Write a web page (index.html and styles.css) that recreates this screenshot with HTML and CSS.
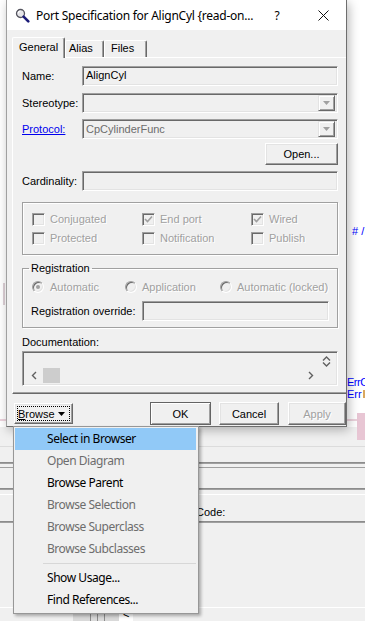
FILE: index.html
```html
<!DOCTYPE html>
<html lang="en">
<head>
    <meta charset="UTF-8">
    <meta name="viewport" content="width=device-width, initial-scale=1.0">
    <title>Port Specification</title>
    <link rel="stylesheet" href="styles.css">
</head>
<body>
<div class="screen">
    <div class="top">
        <div class="edge-left">
            <div class="left-mark"></div>
            <div class="left-pink"></div>
        </div>

        <div class="dialog">
            <div class="titlebar">
                <svg class="title-icon" width="15" height="15" viewBox="0 0 15 15">
                    <circle cx="5.5" cy="5.5" r="4" fill="#e6e6ea" stroke="#55555f" stroke-width="1.3"/>
                    <path d="M3.3 5.2a2.2 2.2 0 0 1 2.2-2.2" stroke="#fff" stroke-width="1.2" fill="none"/>
                    <path d="M8.6 8.6 L13.3 13.3" stroke="#1b1b78" stroke-width="2.6" stroke-linecap="round"/>
                </svg>
                <span class="title-text">Port Specification for AlignCyl {read-on...</span>
                <span class="caption-btn">?</span>
                <span class="caption-btn">
                    <svg width="11" height="11" viewBox="0 0 11 11">
                        <path d="M0.5 0.5 L10.5 10.5 M10.5 0.5 L0.5 10.5" stroke="#111" stroke-width="1"/>
                    </svg>
                </span>
            </div>

            <div class="client">
                <div class="tabs">
                    <div class="tab tab-active tab-general">General</div>
                    <div class="tab tab-alias">Alias</div>
                    <div class="tab tab-files">Files</div>
                </div>

                <div class="panel">
                    <div class="row gap7">
                        <label>Name:</label>
                        <div class="field">AlignCyl</div>
                    </div>
                    <div class="row gap6">
                        <label>Stereotype:</label>
                        <div class="field combo">
                            <span class="combo-text"></span>
                            <span class="drop-btn"><svg width="7" height="4" viewBox="0 0 7 4"><path d="M0 0H7L3.5 4Z" fill="#a0a0a0"/></svg></span>
                        </div>
                    </div>
                    <div class="row gap4">
                        <label><a class="link">Protocol:</a></label>
                        <div class="field combo">
                            <span class="combo-text muted">CpCylinderFunc</span>
                            <span class="drop-btn"><svg width="7" height="4" viewBox="0 0 7 4"><path d="M0 0H7L3.5 4Z" fill="#a0a0a0"/></svg></span>
                        </div>
                    </div>
                    <div class="row row-btn gap6">
                        <button class="btn btn-open">Open...</button>
                    </div>
                    <div class="row">
                        <label>Cardinality:</label>
                        <div class="field"></div>
                    </div>

                    <div class="checks">
                        <div class="check"><span class="box"></span><span class="dim">Conjugated</span></div>
                        <div class="check"><span class="box"><svg width="9" height="9" viewBox="0 0 9 9"><path d="M1 4 L3.5 6.5 L8 1.5" stroke="#a0a0a0" stroke-width="1.6" fill="none"/></svg></span><span class="dim">End port</span></div>
                        <div class="check"><span class="box"><svg width="9" height="9" viewBox="0 0 9 9"><path d="M1 4 L3.5 6.5 L8 1.5" stroke="#a0a0a0" stroke-width="1.6" fill="none"/></svg></span><span class="dim">Wired</span></div>
                        <div class="check"><span class="box"></span><span class="dim">Protected</span></div>
                        <div class="check"><span class="box"></span><span class="dim">Notification</span></div>
                        <div class="check"><span class="box"></span><span class="dim">Publish</span></div>
                    </div>

                    <fieldset class="registration">
                        <legend>Registration</legend>
                        <div class="radios">
                            <div class="radio r1"><span class="dot on"></span><span class="dim">Automatic</span></div>
                            <div class="radio r2"><span class="dot"></span><span class="dim">Application</span></div>
                            <div class="radio r3"><span class="dot"></span><span class="dim">Automatic (locked)</span></div>
                        </div>
                        <div class="override">
                            <label>Registration override:</label>
                            <div class="field field-override"></div>
                        </div>
                    </fieldset>

                    <div class="doc-label">Documentation:</div>
                    <div class="field doc">
                        <div class="doc-top">
                            <div class="doc-text"></div>
                            <div class="vscroll">
                                <svg width="9" height="5" viewBox="0 0 9 5"><path d="M1 4.5 L4.5 1 L8 4.5" stroke="#606060" stroke-width="1.4" fill="none"/></svg>
                                <svg width="9" height="5" viewBox="0 0 9 5"><path d="M1 0.5 L4.5 4 L8 0.5" stroke="#606060" stroke-width="1.4" fill="none"/></svg>
                            </div>
                        </div>
                        <div class="hscroll">
                            <svg class="arrow-left" width="6" height="9" viewBox="0 0 6 9"><path d="M5 1 L1.5 4.5 L5 8" stroke="#606060" stroke-width="1.4" fill="none"/></svg>
                            <span class="thumb"></span>
                            <svg class="arrow-right" width="6" height="9" viewBox="0 0 6 9"><path d="M1 1 L4.5 4.5 L1 8" stroke="#606060" stroke-width="1.4" fill="none"/></svg>
                        </div>
                    </div>
                </div>

                <div class="actions">
                    <button class="btn btn-browse"><span class="focus"><span><u>B</u>rowse</span><svg width="7" height="4" viewBox="0 0 7 4"><path d="M0 0H7L3.5 4Z" fill="#000"/></svg></span></button>
                    <button class="btn btn-ok">OK</button>
                    <button class="btn btn-cancel">Cancel</button>
                    <button class="btn btn-apply">Apply</button>
                </div>
            </div>
        </div>

        <div class="edge-right">
            <div class="note note-hash"># /</div>
            <div class="note note-err">ErrC</div>
            <div class="note">Err<span class="tiny-ico"></span></div>
            <div class="pink-row"><span class="pink-line"></span><span class="pink-block"></span></div>
        </div>
    </div>

    <div class="behind">
        <div class="band band-1"><span class="pink-tail"></span></div>
        <div class="line line-light"></div>
        <div class="band band-2"></div>
        <div class="line line-dark2"></div>
        <div class="band band-3"></div>
        <div class="line line-dark"></div>
        <div class="band band-4"></div>
        <div class="line line-dark2"></div>
        <div class="band band-5"></div>
        <div class="line line-white"></div>
        <div class="code-row">Code:</div>
        <div class="line line-dark2"></div>
        <div class="band band-6"></div>
        <div class="line line-white"></div>
        <div class="band band-7"><span class="stub"><i></i><i></i><i></i><b>&lt;</b></span></div>
    </div>

    <div class="menu">
        <div class="item active">Select in Browser</div>
        <div class="item disabled">Open Diagram</div>
        <div class="item">Browse Parent</div>
        <div class="item disabled">Browse Selection</div>
        <div class="item disabled">Browse Superclass</div>
        <div class="item disabled">Browse Subclasses</div>
        <div class="sep"></div>
        <div class="item">Show Usage...</div>
        <div class="item">Find References...</div>
    </div>
</div>
</body>
</html>
```

FILE: styles.css
```css
* {
    box-sizing: border-box;
}

body {
    margin: 0;
    background: #fff;
    font-family: "Liberation Sans", Arial, sans-serif;
    font-size: 11px;
    color: #000;
}

.screen {
    width: 365px;
    height: 621px;
    overflow: hidden;
    position: relative;
}

.top {
    display: flex;
    height: 427px;
}

/* desktop bits around the dialog */
.edge-left {
    width: 6px;
    background: #fff;
    display: flex;
    flex-direction: column;
}

.left-mark {
    width: 2px;
    height: 22px;
    margin: 283px 0 0 3px;
    background: #ddd0d6;
}

.left-pink {
    height: 2px;
    margin-top: 114px;
    background: #ecd3dd;
}

.edge-right {
    flex: 1;
    min-width: 0;
    background: #fff;
    display: flex;
    flex-direction: column;
}

.note {
    color: #0000ff;
    height: 12px;
    line-height: 12px;
    white-space: nowrap;
    display: flex;
    align-items: center;
}

.note-hash {
    margin-top: 225px;
    padding-left: 5px;
}

.note-err {
    margin-top: 139px;
    letter-spacing: -0.5px;
}

.tiny-ico {
    width: 6px;
    height: 8px;
    margin-left: 1px;
    background: #f3d9a8;
    border: 1px solid #d9a860;
}

.pink-row {
    margin-top: 13px;
    height: 14px;
    display: flex;
}

.pink-line {
    width: 10px;
    height: 2px;
    margin-top: 6px;
    background: #ecd3dd;
}

.pink-block {
    flex: 1;
    background: #e8c6d4;
}

/* dialog */
.dialog {
    width: 341px;
    border: 1px solid #6e6e6e;
    border-left-color: #a0a0a0;
    border-top: none;
    background: #fff;
    display: flex;
    flex-direction: column;
    position: relative;
    z-index: 2;
    box-shadow: 2px 3px 10px rgba(0, 0, 0, 0.28);
}

.titlebar {
    height: 30px;
    display: flex;
    align-items: center;
    padding-left: 8px;
    font-family: "Noto Sans", sans-serif;
    font-size: 12px;
    letter-spacing: -0.25px;
}

.title-icon {
    margin-right: 6px;
    flex: none;
}

.title-text {
    flex: 1;
    white-space: nowrap;
    overflow: hidden;
}

.caption-btn {
    width: 46px;
    height: 30px;
    display: flex;
    align-items: center;
    justify-content: center;
    flex: none;
}

.client {
    flex: 1;
    background: #f0f0f0;
    padding-top: 7px;
    overflow: hidden;
}

.tabs {
    display: flex;
    align-items: flex-end;
    height: 20px;
    margin-left: 5px;
    position: relative;
    z-index: 1;
}

.tab {
    height: 17px;
    border: 1px solid;
    border-color: #fff #696969 transparent #fff;
    border-bottom: none;
    border-radius: 2px 2px 0 0;
    box-shadow: inset -1px 0 #a0a0a0;
    background: #f0f0f0;
    line-height: 15px;
    white-space: nowrap;
}

.tab-active {
    height: 21px;
    margin-bottom: -1px;
    line-height: 19px;
}

.tab-general {
    width: 53px;
    padding-left: 6px;
}

.tab-alias {
    width: 39px;
    padding-left: 3px;
}

.tab-files {
    width: 43px;
    padding-left: 6px;
}

.panel {
    width: 345px;
    height: 337px;
    margin-left: 5px;
    border: 1px solid;
    border-color: #fff #696969 #696969 #fff;
    box-shadow: inset -1px -1px #a0a0a0;
    padding: 8px 0 0 9px;
}

.row {
    display: flex;
    align-items: center;
    width: 316px;
    height: 20px;
}

.row label {
    width: 60px;
    flex: none;
    white-space: nowrap;
}

.gap7 { margin-bottom: 7px; }
.gap6 { margin-bottom: 6px; }
.gap4 { margin-bottom: 4px; }

.row-btn {
    height: 22px;
    justify-content: flex-end;
}

.link {
    color: #0000ee;
    text-decoration: underline;
}

.field {
    flex: 1;
    height: 20px;
    border: 1px solid;
    border-color: #a0a0a0 #fff #fff #a0a0a0;
    box-shadow: inset 1px 1px #696969, inset -1px -1px #e3e3e3;
    background: #f0f0f0;
    padding: 2px 0 0 3px;
    white-space: nowrap;
}

.combo {
    display: flex;
    padding: 1px 2px 1px 3px;
}

.combo-text {
    flex: 1;
    padding-top: 2px;
}

.muted {
    color: #6d6d6d;
}

.drop-btn {
    width: 17px;
    height: 16px;
    border: 1px solid;
    border-color: #e3e3e3 #696969 #696969 #e3e3e3;
    box-shadow: inset 1px 1px #fff, inset -1px -1px #a0a0a0;
    display: flex;
    align-items: center;
    justify-content: center;
}

.btn {
    font-family: "Liberation Sans", Arial, sans-serif;
    font-size: 11px;
    color: #000;
    background: #f0f0f0;
    border: 1px solid;
    border-color: #fff #696969 #696969 #fff;
    box-shadow: inset -1px -1px #a0a0a0, inset 1px 1px #e3e3e3;
    padding: 0;
    height: 23px;
}

.btn-open {
    width: 73px;
    height: 22px;
}

.dim {
    color: #a0a0a0;
    text-shadow: 1px 1px #fff;
    white-space: nowrap;
}

/* check box group */
.checks {
    width: 316px;
    height: 53px;
    margin-top: 11px;
    border: 1px solid #a0a0a0;
    box-shadow: inset 1px 1px #fff, 1px 1px #fff;
    display: grid;
    grid-template-columns: 110px 109px 1fr;
    grid-auto-rows: 16px;
    row-gap: 3px;
    padding: 8px 0 0 9px;
}

.check {
    display: flex;
    align-items: center;
    gap: 5px;
}

.box {
    width: 13px;
    height: 13px;
    flex: none;
    border: 1px solid;
    border-color: #a0a0a0 #fff #fff #a0a0a0;
    box-shadow: inset 1px 1px #696969, inset -1px -1px #e3e3e3;
    background: #f0f0f0;
    display: flex;
    align-items: center;
    justify-content: center;
}

/* registration group */
.registration {
    width: 316px;
    height: 66px;
    margin: 7px 0 0;
    border: 1px solid #a0a0a0;
    box-shadow: inset 1px 1px #fff, 1px 1px #fff;
    padding: 0 0 6px 8px;
    min-width: 0;
}

.registration legend {
    padding: 0 2px;
    margin-left: -2px;
    line-height: 13px;
}

.radios {
    display: flex;
    height: 16px;
    margin-top: 4px;
}

.radio {
    display: flex;
    align-items: center;
    gap: 6px;
    padding-left: 1px;
}

.r1 { width: 93px; }
.r2 { width: 95px; gap: 5px; }
.r3 { gap: 5px; }

.dot {
    width: 12px;
    height: 12px;
    flex: none;
    border-radius: 50%;
    border: 1px solid;
    border-color: #a0a0a0 #fff #fff #a0a0a0;
    box-shadow: inset 1px 1px #696969, inset -1px -1px #e3e3e3;
    background: #f0f0f0;
    display: flex;
    align-items: center;
    justify-content: center;
}

.dot.on::after {
    content: "";
    width: 4px;
    height: 4px;
    border-radius: 50%;
    background: #a0a0a0;
}

.override {
    display: flex;
    align-items: center;
    margin-top: 6px;
}

.override label {
    width: 111px;
    white-space: nowrap;
}

.field-override {
    flex: none;
    width: 187px;
}

.doc-label {
    height: 13px;
    line-height: 13px;
    margin-top: 8px;
}

.doc {
    width: 316px;
    height: 35px;
    margin-top: 2px;
    padding: 2px;
    display: flex;
    flex-direction: column;
}

.doc-top {
    display: flex;
    height: 16px;
}

.doc-text {
    flex: 1;
}

.vscroll {
    width: 17px;
    display: flex;
    flex-direction: column;
    align-items: center;
    justify-content: center;
    gap: 1px;
}

.hscroll {
    height: 15px;
    display: flex;
    align-items: center;
    margin-right: 17px;
    padding-left: 6px;
}

.thumb {
    width: 17px;
    height: 15px;
    margin-left: 6px;
    background: #cdcdcd;
}

.arrow-right {
    margin-left: auto;
    margin-right: 4px;
}

/* bottom buttons */
.actions {
    display: flex;
    align-items: flex-start;
    height: 32px;
    padding: 8px 0 0 7px;
}

.btn-browse {
    width: 59px;
    height: 21px;
    margin-top: 1px;
    padding: 2px;
}

.focus {
    display: flex;
    align-items: center;
    justify-content: space-between;
    height: 100%;
    border: 1px dotted #000;
    padding: 0 4px 0 0;
}

.btn-ok {
    width: 61px;
    margin-left: 77px;
    border-color: #646464;
    box-shadow: inset 1px 1px #fff, inset -1px -1px #a0a0a0;
}

.btn-cancel {
    width: 60px;
    margin-left: 8px;
}

.btn-apply {
    width: 58px;
    margin-left: 9px;
    color: #a0a0a0;
    text-shadow: 1px 1px #fff;
}

/* application behind the dialog */
.behind {
    height: 194px;
    background: #f0f0f0;
}

.band {
    background: #f0f0f0;
}

.band-1 { height: 19px; display: flex; justify-content: flex-end; }
.band-2 { height: 15px; }
.band-3 { height: 3px; }
.band-4 { height: 20px; }
.band-5 { height: 4px; }
.band-6 { height: 84px; }
.band-7 { height: 13px; display: flex; }

.pink-tail {
    width: 8px;
    height: 13px;
    background: #e8c6d4;
}

.line { height: 1px; }
.line-light { background: #dcdcdc; }
.line-white { background: #fff; }
.line-dark { background: #a0a0a0; }
.line-dark2 {
    height: 2px;
    border-top: 1px solid #8c8c8c;
    background: #a0a0a0;
}

.code-row {
    height: 26px;
    padding: 11px 0 0 196px;
    line-height: 13px;
}

.stub {
    width: 60px;
    margin-left: 73px;
    background: #d9d9d9;
    display: flex;
}

.stub i {
    width: 7px;
    border-left: 1px solid #8c8c8c;
}

.stub i:first-child {
    margin-left: 17px;
}

.stub b {
    font-weight: normal;
    margin-left: 8px;
    background: #fff;
    flex: 1;
    padding-left: 4px;
}

/* browse drop-down menu */
.menu {
    position: absolute;
    left: 13px;
    top: 426px;
    width: 186px;
    height: 188px;
    background: #f0f0f0;
    border: 1px solid #979797;
    box-shadow: 2px 2px 3px rgba(0, 0, 0, 0.3);
    padding: 1px 2px 1px 1px;
    z-index: 3;
    font-family: "Noto Sans", sans-serif;
    font-size: 12px;
    letter-spacing: -0.45px;
}

.item {
    height: 22px;
    line-height: 22px;
    padding-left: 32px;
    white-space: nowrap;
}

.item.active {
    background: #91c9f7;
}

.item.disabled {
    color: #6d6d6d;
}

.sep {
    height: 7px;
    margin-left: 28px;
    padding-top: 3px;
}

.sep::before {
    content: "";
    display: block;
    height: 1px;
    background: #d7d7d7;
}
```
